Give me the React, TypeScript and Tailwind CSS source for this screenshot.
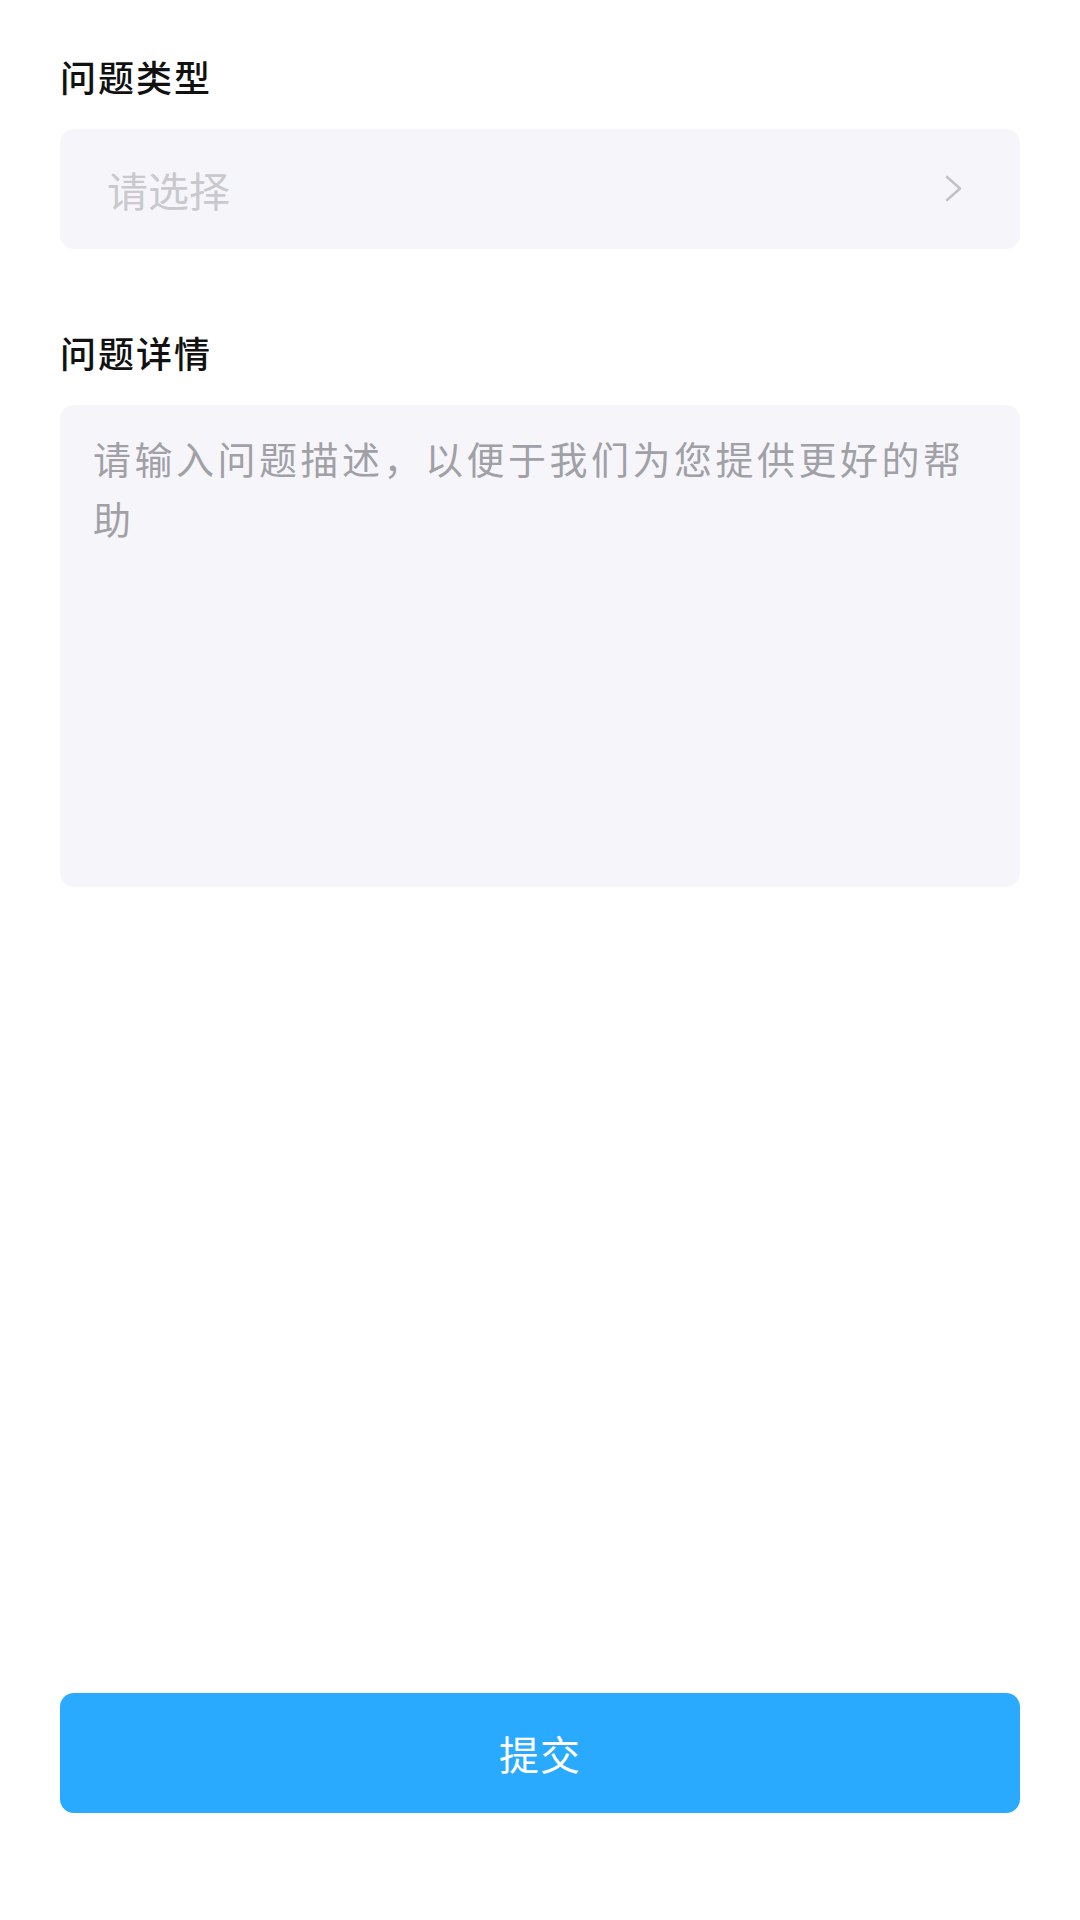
import React from "react";

export default function App() {
  return (
    <div
      className="w-[1080px] h-[1920px] bg-white px-[60px] pt-[50px] flex flex-col"
      style={{ fontFamily: '"Noto Sans CJK SC", "Noto Sans", sans-serif' }}
    >
      <div className="text-[36px] leading-[52px] tracking-[2px] font-medium text-[#111111]">问题类型</div>
      <div className="mt-[27px] h-[120px] rounded-[14px] bg-[#f6f6fa] flex items-center justify-between pl-[47px] pr-[57px]">
        <span className="text-[41px] leading-[52px] text-[#c9c9ce]">请选择</span>
        <svg width="18" height="28" viewBox="0 0 18 28" fill="none">
          <polyline
            points="2,2 15,13.5 2,25"
            stroke="#c2c2c6"
            strokeWidth="2.6"
            strokeLinecap="round"
            strokeLinejoin="round"
          />
        </svg>
      </div>

      <div className="mt-[77px] text-[36px] leading-[52px] tracking-[2px] font-medium text-[#111111]">问题详情</div>
      <div className="mt-[27px] h-[482px] rounded-[14px] bg-[#f6f6fa] pl-[33px] pr-[32px] pt-[23px]">
        <p className="text-[38px] leading-[60px] tracking-[3.5px] text-[#a0a0a6]">
          请输入问题描述，以便于我们为您提供更好的帮助
        </p>
      </div>

      <button className="mt-[806px] h-[120px] w-full rounded-[14px] bg-[#29aafe] text-white text-[40px] leading-[52px] tracking-[1px] flex items-center justify-center">
        提交
      </button>
    </div>
  );
}
